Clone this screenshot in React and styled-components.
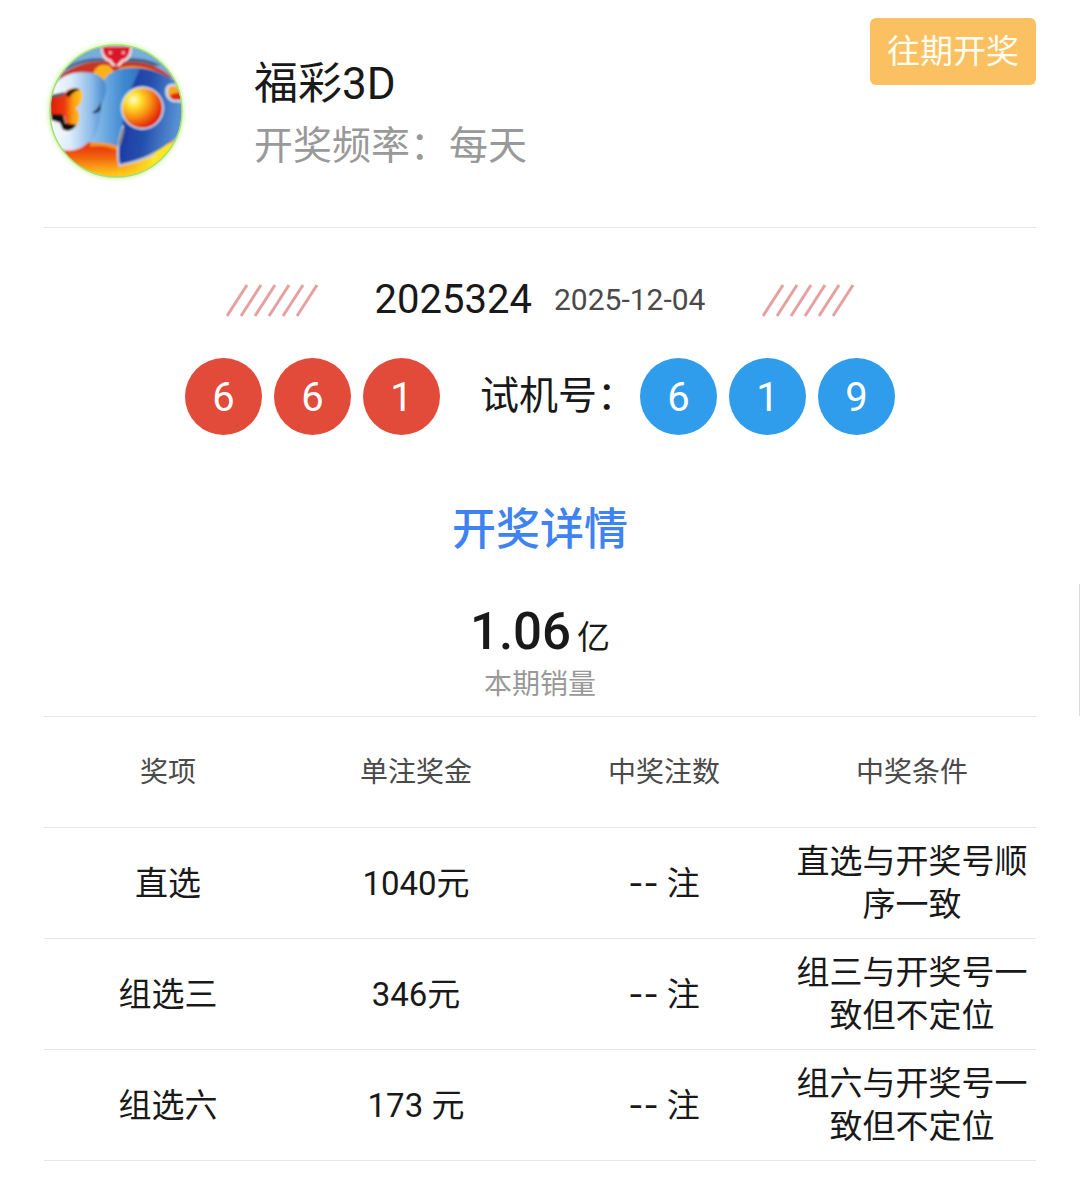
import React from "react";
import styled, { createGlobalStyle, ThemeProvider } from "styled-components";

const theme = {
  colors: {
    text: "#191919",
    secondary: "#4a4a4a",
    muted: "#999999",
    border: "#e6e6e6",
    red: "#e24a39",
    blue: "#2f9dec",
    link: "#3f82f2",
    button: "#fac062",
    slash: "#e6a0a0",
  },
  fontSizes: {
    small: "28px",
    medium: "33px",
    large: "39px",
    number: "40px",
    title: "44px",
    amount: "51px",
  },
};

const draw = {
  issue: "2025324",
  date: "2025-12-04",
  balls: [6, 6, 1],
  testBalls: [6, 1, 9],
};

const prizes = [
  { name: "直选", bonus: "1040元", condition: "直选与开奖号顺序一致" },
  { name: "组选三", bonus: "346元", condition: "组三与开奖号一致但不定位" },
  { name: "组选六", bonus: "173 元", condition: "组六与开奖号一致但不定位" },
];

const App = () => {
  return (
    <ThemeProvider theme={theme}>
      <GlobalStyle />
      <Page>
        <Header>
          <Logo />
          <HeaderText>
            <LotteryName>福彩3D</LotteryName>
            <Frequency>开奖频率：每天</Frequency>
          </HeaderText>
          <HistoryButton type="button">往期开奖</HistoryButton>
        </Header>

        <IssueRow>
          <Slashes />
          <IssueText>
            <Issue>{draw.issue}</Issue>
            <DrawDate dateTime={draw.date}>{draw.date}</DrawDate>
          </IssueText>
          <Slashes />
        </IssueRow>

        <BallRow>
          <Balls>
            {draw.balls.map((ball, index) => (
              <Ball key={index}>{ball}</Ball>
            ))}
          </Balls>
          <TestLabel>试机号：</TestLabel>
          <Balls>
            {draw.testBalls.map((ball, index) => (
              <Ball key={index} $test>
                {ball}
              </Ball>
            ))}
          </Balls>
        </BallRow>

        <DetailTitle>开奖详情</DetailTitle>

        <Sales>
          <Amount>
            1.06<Unit>亿</Unit>
          </Amount>
          <SalesCaption>本期销量</SalesCaption>
        </Sales>

        <PrizeTable>
          <thead>
            <tr>
              <HeadCell scope="col">奖项</HeadCell>
              <HeadCell scope="col">单注奖金</HeadCell>
              <HeadCell scope="col">中奖注数</HeadCell>
              <HeadCell scope="col">中奖条件</HeadCell>
            </tr>
          </thead>
          <tbody>
            {prizes.map((prize) => (
              <tr key={prize.name}>
                <Cell>{prize.name}</Cell>
                <Cell>{prize.bonus}</Cell>
                <Cell>
                  <Dashes>--</Dashes> 注
                </Cell>
                <Cell>{prize.condition}</Cell>
              </tr>
            ))}
          </tbody>
        </PrizeTable>
      </Page>
      <ScrollThumb />
    </ThemeProvider>
  );
};

const Logo = () => (
  <LogoSvg viewBox="12 40 420 420" aria-hidden="true">
    <defs>
      <clipPath id="disc">
        <circle cx="228" cy="241" r="197" />
      </clipPath>
      <filter id="glow" x="-20%" y="-20%" width="140%" height="140%">
        <feGaussianBlur stdDeviation="7" />
      </filter>
      <filter id="soft">
        <feGaussianBlur stdDeviation="3" />
      </filter>
      <linearGradient id="ground" x1="0" y1="0" x2="0" y2="1">
        <stop offset="0" stopColor="#e32410" />
        <stop offset="0.4" stopColor="#f2600e" />
        <stop offset="0.85" stopColor="#ffc81c" />
      </linearGradient>
      <linearGradient id="groundRight" x1="0" y1="0" x2="1" y2="0">
        <stop offset="0" stopColor="#ffc414" stopOpacity="0" />
        <stop offset="0.6" stopColor="#ffe620" />
      </linearGradient>
      <linearGradient id="bodyLeft" x1="0" y1="0" x2="1" y2="0">
        <stop offset="0" stopColor="#ffffff" />
        <stop offset="0.4" stopColor="#dcecfb" />
        <stop offset="0.75" stopColor="#8dbce8" />
        <stop offset="1" stopColor="#4588cd" />
      </linearGradient>
      <linearGradient id="bodyMid" x1="0" y1="0" x2="1" y2="0">
        <stop offset="0" stopColor="#9ccbf0" />
        <stop offset="0.4" stopColor="#3e88d0" />
        <stop offset="1" stopColor="#1a3f9f" />
      </linearGradient>
      <linearGradient id="bodyRight" x1="0" y1="0" x2="1" y2="0.2">
        <stop offset="0" stopColor="#1a2f9c" />
        <stop offset="0.5" stopColor="#2450ae" />
        <stop offset="1" stopColor="#5c97d6" />
      </linearGradient>
      <radialGradient id="sun" cx="0.28" cy="0.3" r="0.75">
        <stop offset="0" stopColor="#fffbd0" />
        <stop offset="0.25" stopColor="#ffe02a" />
        <stop offset="0.6" stopColor="#f98a12" />
        <stop offset="1" stopColor="#df1d0c" />
      </radialGradient>
      <linearGradient id="ember" x1="0" y1="0" x2="1" y2="0">
        <stop offset="0" stopColor="#dd1c10" />
        <stop offset="0.45" stopColor="#ee3a0e" />
        <stop offset="0.7" stopColor="#fb9c12" />
        <stop offset="1" stopColor="#ffcb1c" />
      </linearGradient>
    </defs>

    <circle cx="228" cy="241" r="203" fill="#c8f59c" filter="url(#glow)" />
    <g clipPath="url(#disc)">
      <g filter="url(#soft)">
        <rect x="20" y="30" width="420" height="430" fill="#78aedb" />
        {/* red and orange bands at the top */}
        <path
          d="M60 134 C110 98 160 88 220 92 C300 88 350 100 392 138 L392 170 L60 170Z"
          fill="#c93422"
        />
        <path d="M84 106 C120 86 160 78 200 84 L200 94 C150 90 120 96 70 122Z" fill="#496a8d" />
        <path d="M262 82 C310 82 340 90 362 104 L340 106 C310 94 285 94 256 96Z" fill="#4a6588" />
        <path d="M160 128 C166 106 184 98 206 104 L226 126 L200 154Z" fill="#fbb117" />
        <path d="M236 112 C280 98 330 108 374 134 L340 132 C300 116 270 116 238 124Z" fill="#f89a18" />
        {/* ground */}
        <path d="M60 354 C130 320 200 334 250 336 L430 330 L420 450 L60 450Z" fill="url(#ground)" />
        <path d="M240 400 L430 320 L430 450 L200 450Z" fill="url(#groundRight)" />
        <path d="M150 336 C190 326 220 338 240 350 L236 362 C210 346 180 346 150 348Z" fill="#f7931a" />
        {/* blue body */}
        <path
          d="M186 170 C192 122 240 108 300 112 C340 116 370 130 398 160 L420 210 L300 330 L240 350 C210 336 180 336 140 334Z"
          fill="url(#bodyMid)"
        />
        <path
          d="M300 114 C346 116 378 134 404 152 L436 200 L430 286 C400 348 310 386 238 404 C230 370 236 320 248 282 L262 200Z"
          fill="url(#bodyRight)"
        />
        <path
          d="M38 184 C46 132 110 118 160 128 C204 140 206 180 184 222 C178 286 170 324 146 334 C120 362 78 366 50 352 L20 280Z"
          fill="url(#bodyLeft)"
        />
        <path d="M156 246 C168 240 178 228 184 212 L182 238 C176 246 166 250 156 246Z" fill="#28394e" />
        {/* red recess on the left */}
        <path
          d="M30 198 L72 192 C78 174 108 164 124 180 C134 196 124 222 108 232 C122 248 122 276 106 288 L80 286 L72 254 L30 254Z"
          fill="url(#ember)"
        />
        <path d="M76 194 C84 176 106 168 120 178 C106 180 94 188 88 200Z" fill="#171310" />
        <path d="M36 192 L74 184 L72 194 L34 202Z" fill="#44586a" />
        <path d="M34 250 L70 252 L76 278 L108 282 C100 300 80 304 68 296 L60 276 L34 268Z" fill="#17100f" />
        <path d="M34 276 L58 282 L66 300 L88 302 L80 312 L52 310Z" fill="#f1f5f9" />
        {/* pale edge of the wing */}
        <path
          d="M250 284 C238 320 228 366 238 404 C270 398 310 386 346 370"
          fill="none"
          stroke="#b9cce6"
          strokeWidth="6"
        />
        <path d="M250 296 L238 342" stroke="#8a8577" strokeWidth="8" />
        <circle cx="307" cy="232" r="65" fill="#c4def2" />
        <circle cx="307" cy="232" r="60" fill="url(#sun)" />
        <path d="M376 176 C380 156 404 152 430 170 L430 216 L396 214 C380 206 374 194 376 176Z" fill="#c4def2" />
        <path d="M384 178 C386 162 404 160 430 176 L430 208 L400 208 C388 202 382 192 384 178Z" fill="#fba51a" />
        <path d="M388 196 C400 186 416 184 430 188 L430 208 L400 208Z" fill="#e22a10" />
        {/* heart badge */}
        <path
          d="M182 46 L276 46 C278 76 266 92 250 94 L240 106 L216 106 L208 94 C190 90 182 72 182 46Z"
          fill="#f4d6d8"
        />
        <path
          d="M188 48 L270 48 C270 72 258 86 246 86 L228 106 L212 86 C198 84 188 68 188 48Z"
          fill="#d9152b"
        />
        <circle cx="211" cy="66" r="5" fill="#f5a9b0" />
        <circle cx="250" cy="66" r="5" fill="#f5a9b0" />
      </g>
    </g>
    <circle cx="228" cy="241" r="198" fill="none" stroke="#a6dc74" strokeWidth="4" />
  </LogoSvg>
);

const Slashes = () => (
  <SlashSvg viewBox="0 0 92 34" aria-hidden="true">
    {[0, 14, 28, 42, 56, 70].map((x) => (
      <line key={x} x1={x + 1} y1="33" x2={x + 21} y2="2" />
    ))}
  </SlashSvg>
);

const GlobalStyle = createGlobalStyle`
  * {
    box-sizing: border-box;
  }

  body {
    margin: 0;
    background: #ffffff;
    color: ${theme.colors.text};
    font-family: Roboto, "Noto Sans CJK SC", sans-serif;
  }
`;

const Page = styled.main`
  padding: 0 44px 24px;
`;

const Header = styled.header`
  display: flex;
  align-items: center;
  height: 228px;
  border-bottom: 1px solid ${({ theme }) => theme.colors.border};
`;

const LogoSvg = styled.svg`
  flex: none;
  width: 140px;
  height: 140px;
  overflow: visible;
`;

const HeaderText = styled.div`
  flex: 1;
  margin-left: 70px;
`;

const LotteryName = styled.h1`
  margin: 0;
  font-size: ${({ theme }) => theme.fontSizes.title};
  font-weight: 400;
  line-height: 64px;
`;

const Frequency = styled.p`
  margin: 0;
  color: ${({ theme }) => theme.colors.muted};
  font-size: ${({ theme }) => theme.fontSizes.large};
  line-height: 60px;
`;

const HistoryButton = styled.button`
  align-self: flex-start;
  margin-top: 18px;
  padding: 0 17px;
  border: 0;
  border-radius: 6px;
  background: ${({ theme }) => theme.colors.button};
  color: #fffef0;
  font-family: inherit;
  font-size: ${({ theme }) => theme.fontSizes.medium};
  line-height: 67px;
  cursor: pointer;
`;

const IssueRow = styled.div`
  display: flex;
  align-items: center;
  justify-content: center;
  gap: 57px;
  margin-top: 48px;
`;

const SlashSvg = styled.svg`
  width: 92px;
  height: 34px;
  stroke: ${({ theme }) => theme.colors.slash};
  stroke-width: 3px;
`;

const IssueText = styled.div`
  display: flex;
  align-items: center;
  gap: 22px;
  line-height: 48px;
`;

const Issue = styled.span`
  font-size: ${({ theme }) => theme.fontSizes.number};
`;

const DrawDate = styled.time`
  color: ${({ theme }) => theme.colors.secondary};
  font-size: 30px;
`;

const BallRow = styled.div`
  display: flex;
  align-items: center;
  justify-content: center;
  margin-top: 34px;
`;

const Balls = styled.div`
  display: flex;
  gap: 12px;
`;

const Ball = styled.span`
  width: 77px;
  height: 77px;
  border-radius: 50%;
  background: ${({ theme, $test }) =>
    $test ? theme.colors.blue : theme.colors.red};
  color: #ffffff;
  font-size: ${({ theme }) => theme.fontSizes.number};
  line-height: 80px;
  text-align: center;
`;

const TestLabel = styled.span`
  margin: 0 4px 0 40px;
  font-size: ${({ theme }) => theme.fontSizes.large};
  line-height: 77px;
`;

const DetailTitle = styled.h2`
  margin: 65px 0 0;
  color: ${({ theme }) => theme.colors.link};
  font-size: ${({ theme }) => theme.fontSizes.title};
  font-weight: 500;
  line-height: 60px;
  text-align: center;
`;

const Sales = styled.div`
  margin-top: 41px;
  padding-bottom: 9px;
  text-align: center;
`;

const Amount = styled.div`
  font-size: ${({ theme }) => theme.fontSizes.amount};
  font-weight: 500;
  line-height: 62px;
`;

const Unit = styled.span`
  margin-left: 6px;
  font-size: ${({ theme }) => theme.fontSizes.medium};
  font-weight: 400;
  line-height: 1;
`;

const SalesCaption = styled.div`
  color: ${({ theme }) => theme.colors.muted};
  font-size: ${({ theme }) => theme.fontSizes.small};
  line-height: 44px;
`;

const PrizeTable = styled.table`
  width: 100%;
  border-top: 1px solid ${({ theme }) => theme.colors.border};
  border-spacing: 0;
  table-layout: fixed;
  text-align: center;
`;

const Cell = styled.td`
  height: 111px;
  padding: 0;
  border-bottom: 1px solid ${({ theme }) => theme.colors.border};
  font-size: ${({ theme }) => theme.fontSizes.medium};
  line-height: 43px;
`;

const HeadCell = styled(Cell).attrs({ as: "th" })`
  color: ${({ theme }) => theme.colors.secondary};
  font-size: ${({ theme }) => theme.fontSizes.small};
  font-weight: 400;
`;

const Dashes = styled.span`
  font-family: Inter, sans-serif;
`;

const ScrollThumb = styled.div`
  position: absolute;
  top: 584px;
  right: 0;
  width: 1px;
  height: 132px;
  background: #dcdcdc;
`;

export default App;
